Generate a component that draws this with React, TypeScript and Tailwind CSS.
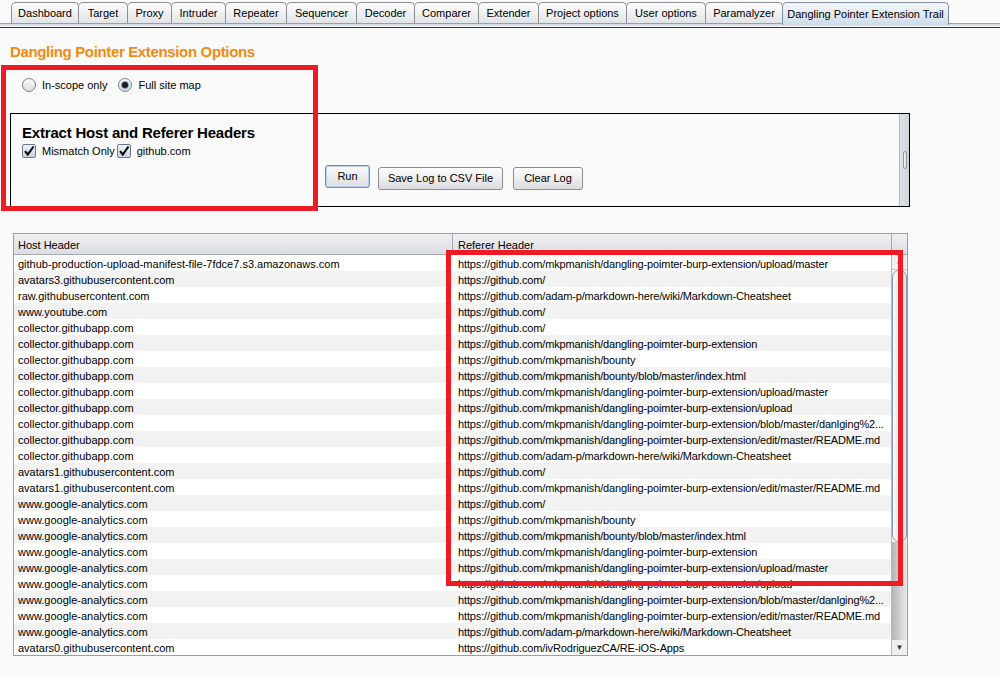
import React from 'react'

const tabs = [
  { label: 'Dashboard', w: 'w-[68px]' },
  { label: 'Target', w: 'w-[50px]' },
  { label: 'Proxy', w: 'w-[45px]' },
  { label: 'Intruder', w: 'w-[55px]' },
  { label: 'Repeater', w: 'w-[62px]' },
  { label: 'Sequencer', w: 'w-[71px]' },
  { label: 'Decoder', w: 'w-[59px]' },
  { label: 'Comparer', w: 'w-[65px]' },
  { label: 'Extender', w: 'w-[61px]' },
  { label: 'Project options', w: 'w-[89px]' },
  { label: 'User options', w: 'w-[80px]' },
  { label: 'Paramalyzer', w: 'w-[78px]' },
  { label: 'Dangling Pointer Extension Trail', w: 'w-[167px]', active: true },
]

const gh = 'https://github.com/'
const dp = 'https://github.com/mkpmanish/dangling-poimter-burp-extension'
const md = 'https://github.com/adam-p/markdown-here/wiki/Markdown-Cheatsheet'
const ga = 'www.google-analytics.com'
const col = 'collector.githubapp.com'

const rows: [string, string][] = [
  ['github-production-upload-manifest-file-7fdce7.s3.amazonaws.com', dp + '/upload/master'],
  ['avatars3.githubusercontent.com', gh],
  ['raw.githubusercontent.com', md],
  ['www.youtube.com', gh],
  [col, gh],
  [col, dp],
  [col, 'https://github.com/mkpmanish/bounty'],
  [col, 'https://github.com/mkpmanish/bounty/blob/master/index.html'],
  [col, dp + '/upload/master'],
  [col, dp + '/upload'],
  [col, dp + '/blob/master/danlging%2...'],
  [col, dp + '/edit/master/README.md'],
  [col, md],
  ['avatars1.githubusercontent.com', gh],
  ['avatars1.githubusercontent.com', dp + '/edit/master/README.md'],
  [ga, gh],
  [ga, 'https://github.com/mkpmanish/bounty'],
  [ga, 'https://github.com/mkpmanish/bounty/blob/master/index.html'],
  [ga, dp],
  [ga, dp + '/upload/master'],
  [ga, dp + '/upload'],
  [ga, dp + '/blob/master/danlging%2...'],
  [ga, dp + '/edit/master/README.md'],
  [ga, md],
  ['avatars0.githubusercontent.com', 'https://github.com/ivRodriguezCA/RE-iOS-Apps'],
]

function Radio({ checked, label }: { checked?: boolean; label: string }) {
  return (
    <label className="flex items-center gap-[6px]">
      <span className="w-[14px] h-[14px] rounded-full border border-[#7d8187] bg-linear-to-b from-[#fdfdfd] to-[#d9dbde] flex items-center justify-center">
        {checked && <span className="w-[6px] h-[6px] rounded-full bg-[#1c1c1c] ring-1 ring-[#8aa4c4]" />}
      </span>
      <span>{label}</span>
    </label>
  )
}

function Check({ label }: { label: string }) {
  return (
    <label className="flex items-center gap-[6px]">
      <span className="w-[14px] h-[14px] rounded-[2px] border border-[#6d7a8a] bg-linear-to-b from-[#eef2f7] to-[#c9d3df] flex items-center justify-center">
        <svg width="12" height="12" viewBox="0 0 12 12" fill="none" stroke="#000" strokeWidth="2">
          <path d="M2 6.2 L4.8 9.5 L10.5 1.5" />
        </svg>
      </span>
      <span>{label}</span>
    </label>
  )
}

function Button({ label, focus, w }: { label: string; focus?: boolean; w: string }) {
  return (
    <button
      className={`${w} h-[23px] rounded-[3px] border bg-linear-to-b from-[#fdfdfd] to-[#dcdde1] text-[11px] text-black ${
        focus ? 'border-[#6f90b5] ring-1 ring-inset ring-[#b9d0ea]' : 'border-[#8b8d91]'
      }`}
    >
      {label}
    </button>
  )
}

export default function App() {
  return (
    <div
      className="relative w-[1000px] h-[676px] bg-[#fafafa] overflow-hidden text-black"
      style={{ fontFamily: '"Liberation Sans", Arial, sans-serif' }}
    >
      {/* Tab bar */}
      <div className="flex pl-[11px] pt-[2px] h-[23px]">
        {tabs.map((t, i) => (
          <div
            key={t.label}
            className={`${t.w} ${i > 0 ? '-ml-px' : ''} flex items-center justify-center border border-b-0 rounded-t-[5px] text-[11px] ${
              t.active
                ? 'relative z-10 h-[23px] border-[#7f8ea2] bg-linear-to-b from-[#f3f7fb] to-[#cfdceb]'
                : 'h-[21px] border-[#8c8f94] bg-linear-to-b from-[#fefefe] to-[#e2e3e6]'
            }`}
          >
            {t.label}
          </div>
        ))}
      </div>
      <div className="h-[3px] border-t border-[#93a3b7] bg-[#d6e0ec]" />
      <div className="h-px bg-[#fafafa]" />
      <div className="h-px bg-[#353535]" />

      {/* Options */}
      <div className="pl-[10px] pt-[15px] text-[15px] font-bold text-[#ef8a12] tracking-[-0.35px] leading-[18px]">
        Dangling Pointer Extension Options
      </div>
      <div className="flex items-center gap-[11px] pl-[22px] mt-[16px] h-[16px] text-[11px]">
        <Radio label="In-scope only" />
        <Radio label="Full site map" checked />
      </div>

      <div className="ml-[10px] mt-[20px] w-[900px] h-[94px] border border-black flex">
        <div className="flex-1 pl-[11px] pt-[10px]">
          <div className="text-[15px] font-bold leading-[18px] tracking-[-0.2px]">Extract Host and Referer Headers</div>
          <div className="flex items-center gap-[2px] mt-px h-[16px] text-[11px]">
            <Check label="Mismatch Only" />
            <Check label="github.com" />
          </div>
          <div className="flex ml-[303px] mt-[6px]">
            <Button label="Run" focus w="w-[45px]" />
            <div className="ml-[8px]">
              <Button label="Save Log to CSV File" w="w-[125px]" />
            </div>
            <div className="ml-[10px]">
              <Button label="Clear Log" w="w-[70px]" />
            </div>
          </div>
        </div>
        <div className="w-[10px] border-l border-[#b3b9c3] bg-linear-to-r from-[#dfe2e8] to-[#cdd1d9] flex items-center justify-center">
          <div className="w-[4px] h-[18px] rounded-[2px] border border-[#8e96a2] bg-[#e8ebf0]" />
        </div>
      </div>

      {/* Table */}
      <div className="ml-[13px] mt-[26px] w-[895px] border border-[#9a9ea6] bg-white text-[11px]">
        <div className="flex h-[21px] border-b border-[#a6a9ae] bg-linear-to-b from-[#f1f1f3] to-[#dcdde2]">
          <div className="w-[439px] border-r border-[#a6a9ae] pl-[4px] pt-[2px] flex items-center">Host Header</div>
          <div className="w-[439px] border-r border-[#a6a9ae] pl-[5px] pt-[2px] flex items-center">Referer Header</div>
          <div className="flex-1" />
        </div>
        <div className="flex">
          <div className="w-[877px]">
            {rows.map(([host, ref], i) => (
              <div key={i} className={`flex h-[16px] pt-[3px] leading-[13px] ${i % 2 ? 'bg-[#f2f2f2]' : 'bg-white'}`}>
                <div className="w-[438px] pl-[4px] whitespace-nowrap overflow-hidden">{host}</div>
                <div className="flex-1 pl-[6px] whitespace-nowrap overflow-hidden tracking-[-0.14px]">{ref}</div>
              </div>
            ))}
          </div>
          <div className="w-[16px] flex flex-col border-l border-[#b4b8bf] bg-[#eef1f4]">
            <div className="h-[15px] flex items-center justify-center text-[8px] text-[#555] border-b border-[#c3c9d1]">▲</div>
            <div className="h-[272px] rounded-[7px] border border-[#8d9bad] bg-linear-to-r from-[#f6f8fb] to-[#dde4ec]" />
            <div className="flex-1 bg-linear-to-r from-[#b5b5b5] via-[#cfcfcf] to-[#e9e9e9]" />
            <div className="h-[15px] flex items-center justify-center text-[8px] text-[#333] bg-[#eef0f2]">▼</div>
          </div>
        </div>
      </div>

      {/* annotation boxes */}
      <div className="absolute left-[1px] top-[65px] w-[317px] h-[146px] border-[5px] border-[#ed1c24]" />
      <div className="absolute left-[446px] top-[250px] w-[457px] h-[336px] border-[5px] border-[#ed1c24]" />
    </div>
  )
}
